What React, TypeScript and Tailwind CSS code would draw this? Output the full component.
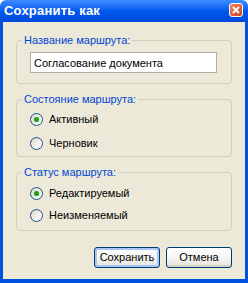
const Radio = ({ checked, label }: { checked?: boolean; label: string }) => (
  <div className="flex items-center h-[22px]">
    <span className="w-[13px] h-[13px] rounded-full border border-[#1c5180] bg-gradient-to-br from-[#dcd9cf] to-white flex items-center justify-center">
      {checked && <span className="w-[5px] h-[5px] rounded-full bg-[#21a121] shadow-[0_0_1px_#6fd66f]" />}
    </span>
    <span className="ml-[6px] text-black">{label}</span>
  </div>
);

const Group = ({ title, children }: { title: string; children: React.ReactNode }) => (
  <fieldset className="border border-[#d0d0bf] rounded-[4px]">
    <legend className="ml-[5px] px-[2px] leading-[13px] text-[#0046d5]">{title}</legend>
    <div className="pl-[13px] pr-[14px]">{children}</div>
  </fieldset>
);

const Button = ({ label, primary }: { label: string; primary?: boolean }) => (
  <button
    className={
      "w-[66px] h-[21px] rounded-[3px] border border-[#003c74] bg-gradient-to-b from-white via-[#f6f5f1] to-[#e3e2dc] text-black leading-none " +
      (primary ? "shadow-[inset_0_0_0_2px_#aac6f6]" : "shadow-[inset_0_-2px_0_#d6d0c5]")
    }
  >
    {label}
  </button>
);

export default function App() {
  return (
    <div className="w-[248px] h-[283px] flex flex-col text-[11px] font-['Liberation_Sans',Arial,sans-serif]">
      <div className="h-[22px] flex items-center justify-between pl-[4px] pr-[5px] rounded-t-[6px] bg-gradient-to-b from-[#3d8dff] via-[#0058ee] to-[#0049dc]">
        <span className="text-white font-bold text-[13px] tracking-[0.2px]">Сохранить как</span>
        <span className="w-[14px] h-[14px] mb-[2px] rounded-[3px] border border-white bg-gradient-to-br from-[#ee8460] to-[#d2401c] flex items-center justify-center">
          <svg width="8" height="8" viewBox="0 0 8 8">
            <path d="M1 1 L7 7 M7 1 L1 7" stroke="white" strokeWidth="1.8" />
          </svg>
        </span>
      </div>
      <div className="flex-1 flex flex-col bg-[#ece9d8] border-x-[3px] border-b-[4px] border-[#0052e0] px-[13px] pt-[12px]">
        <Group title="Название маршрута:">
          <input
            readOnly
            value="Согласование документа"
            className="mt-[5px] mb-[10px] w-[187px] h-[21px] border border-[#b8aca4] bg-white px-[3px] text-black outline-none"
          />
        </Group>
        <div className="mt-[9px]">
          <Group title="Состояние маршрута:">
            <div className="pt-[2px] pb-[2px] flex flex-col gap-[2px]">
              <Radio checked label="Активный" />
              <Radio label="Черновик" />
            </div>
          </Group>
        </div>
        <div className="mt-[9px]">
          <Group title="Статус маршрута:">
            <div className="pt-[3px] pb-[4px] flex flex-col">
              <Radio checked label="Редактируемый" />
              <Radio label="Неизменяемый" />
            </div>
          </Group>
        </div>
        <div className="mt-[16px] flex justify-end gap-[6px]">
          <Button primary label="Сохранить" />
          <Button label="Отмена" />
        </div>
      </div>
    </div>
  );
}
